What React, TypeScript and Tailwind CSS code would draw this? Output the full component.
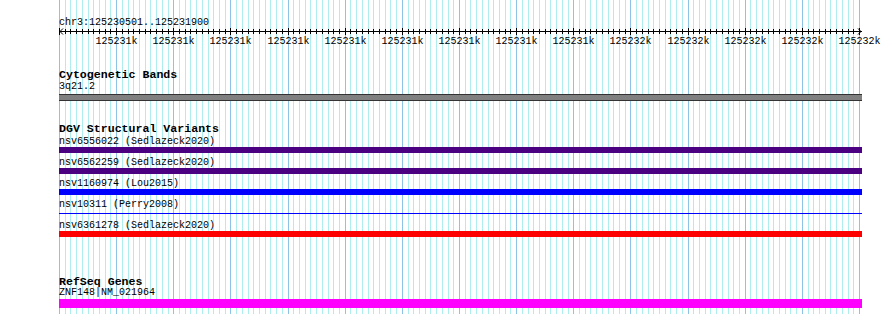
import React from "react";

const X0 = 59;
const SPAN = 800;
const N = 140;
const xs = Array.from({ length: N + 1 }, (_, k) => Math.round(X0 + (k * SPAN) / N) + 0.5);

function Grid() {
  return (
    <svg className="absolute left-0 top-0" width={890} height={314} shapeRendering="crispEdges">
      {xs.map((x, k) => (
        <line
          key={k}
          x1={x}
          x2={x}
          y1={0}
          y2={314}
          stroke={k % 10 === 0 ? "#8cc3e6" : "#aeeeee"}
          strokeWidth={1}
        />
      ))}
    </svg>
  );
}

function Ruler() {
  const labels = Array.from({ length: 14 }, (_, i) => i + 1);
  return (
    <svg width={890} height={20} shapeRendering="crispEdges" className="block">
      <line x1={59} x2={862} y1={3.5} y2={3.5} stroke="#000" strokeWidth={1} />
      {xs.map((x, k) => (
        <line
          key={k}
          x1={x}
          x2={x}
          y1={k % 10 === 0 ? 0 : 1}
          y2={k % 10 === 0 ? 7 : 6}
          stroke="#000"
          strokeWidth={1}
        />
      ))}
      <polyline points="63,0.5 60,3.5 63,6.5" fill="none" stroke="#000" strokeWidth={1} shapeRendering="auto" />
      <polyline points="858,0.5 861,3.5 858,6.5" fill="none" stroke="#000" strokeWidth={1} shapeRendering="auto" />
      {labels.map((i) => (
        <text
          key={i}
          x={Math.round(X0 + (i * SPAN) / 14) + 0.5}
          y={15.5}
          textAnchor="middle"
          fontFamily='"Liberation Mono", monospace'
          fontSize={10}
          fill="#000"
        >
          {i <= 9 ? "125231k" : "125232k"}
        </text>
      ))}
    </svg>
  );
}

type Row = { label: string; color: string; thin?: boolean };

const rows: Row[] = [
  { label: "nsv6556022 (Sedlazeck2020)", color: "bg-[#4b0082]" },
  { label: "nsv6562259 (Sedlazeck2020)", color: "bg-[#4b0082]" },
  { label: "nsv1160974 (Lou2015)", color: "bg-[#0000ff]" },
  { label: "nsv10311 (Perry2008)", color: "bg-[#0000ff]", thin: true },
  { label: "nsv6361278 (Sedlazeck2020)", color: "bg-[#ff0000]" },
];

function Title({ children, className = "" }: { children: React.ReactNode; className?: string }) {
  return (
    <div className={`h-[11px] leading-[11px] text-[11.6px] font-bold whitespace-nowrap ${className}`}>
      {children}
    </div>
  );
}

function Label({ children, className = "" }: { children: React.ReactNode; className?: string }) {
  return (
    <div className={`h-[11px] leading-[11px] text-[10px] whitespace-nowrap ${className}`}>{children}</div>
  );
}

export default function App() {
  return (
    <div
      className="relative w-[890px] h-[314px] bg-white overflow-hidden text-black"
      style={{ fontFamily: '"Liberation Mono", monospace' }}
    >
      <Grid />
      <div className="relative flex flex-col">
        <div className="h-[28px] pt-[17px] pl-[59px]">
          <Label>chr3:125230501..125231900</Label>
        </div>
        <Ruler />

        <div className="pl-[59px] flex flex-col">
          <Title className="mt-[21px]">Cytogenetic Bands</Title>
          <Label className="mt-[1px]">3q21.2</Label>
          <div className="mt-[2px] h-[7px] w-[803px] bg-[#808080] border-y border-[#333333]" />

          <Title className="mt-[22px]">DGV Structural Variants</Title>
          {rows.map((r) => (
            <div key={r.label} className="h-[21px] flex flex-col">
              <Label className="mt-[2px]">{r.label}</Label>
              {r.thin ? (
                <div className="h-[6px] w-[803px] flex items-center">
                  <div className={`h-[1px] w-[803px] ${r.color}`} />
                </div>
              ) : (
                <div className={`h-[6px] w-[803px] ${r.color}`} />
              )}
            </div>
          ))}

          <Title className="mt-[37px]">RefSeq Genes</Title>
          <Label>ZNF148|NM_021964</Label>
          <div className="mt-[1px] h-[9px] w-[803px] bg-[#ff00ff]" />
        </div>
      </div>
    </div>
  );
}
